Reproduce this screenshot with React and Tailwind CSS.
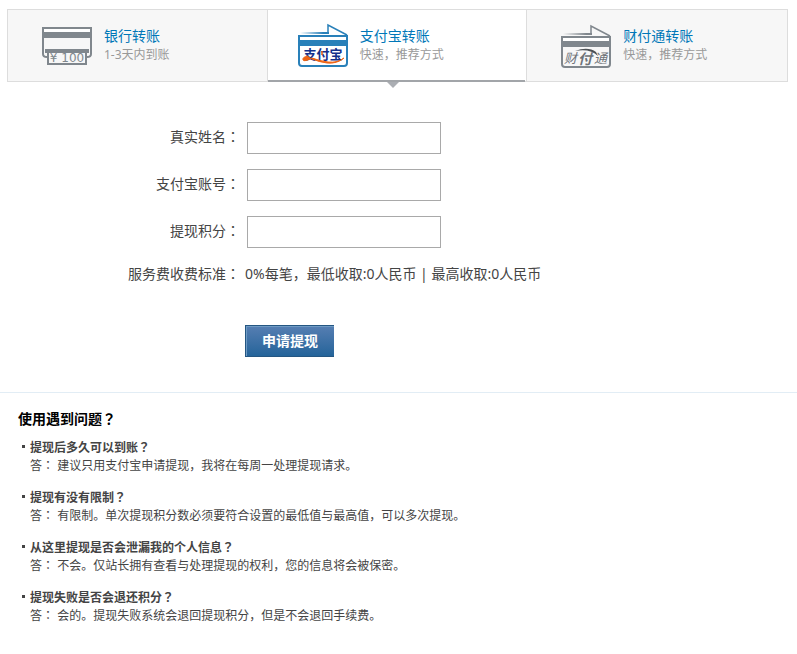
import React, { useState } from "react";

const FAQS = [
  {
    question: "提现后多久可以到账",
    answer: "建议只用支付宝申请提现，我将在每周一处理提现请求。",
  },
  {
    question: "提现有没有限制",
    answer: "有限制。单次提现积分数必须要符合设置的最低值与最高值，可以多次提现。",
  },
  {
    question: "从这里提现是否会泄漏我的个人信息",
    answer: "不会。仅站长拥有查看与处理提现的权利，您的信息将会被保密。",
  },
  {
    question: "提现失败是否会退还积分",
    answer: "会的。提现失败系统会退回提现积分，但是不会退回手续费。",
  },
];

// Full-width punctuation, centred in its cell
const Mark = ({ children }) => (
  <span className="leading-none font-['Noto_Sans_CJK_TC',sans-serif]">{children}</span>
);

const BankIcon = () => (
  <svg width="52" height="47" viewBox="0 0 52 47" aria-hidden="true">
    <path d="M2 6v26q0 3 4 3M50 6v26q0 3-4 3" fill="none" stroke="#80878d" strokeWidth="2" />
    <path d="M2 6h48v5H2z" fill="#fff" />
    <path d="M1 5h50v11H1zM3 7v3h46V7z" fill="#80878d" fillRule="evenodd" />
    <path d="M4 27h44v4H4z" fill="#80878d" />
    <path d="M7 30h38v12H7z" fill="#f7f7f7" stroke="#80878d" strokeWidth="2" />
    <text x="26" y="40" textAnchor="middle" fontSize="12" fill="#80878d" className="font-['DejaVu_Sans',sans-serif]">
      ¥ 100
    </text>
  </svg>
);

const AlipayIcon = () => (
  <svg width="52" height="47" viewBox="0 0 52 47" aria-hidden="true">
    <defs>
      <linearGradient id="alipayFade">
        <stop offset="0" stopColor="#2980b9" stopOpacity="0" />
        <stop offset="0.8" stopColor="#2980b9" />
      </linearGradient>
    </defs>
    <path d="M3 10h29v2H3z" fill="url(#alipayFade)" />
    <path d="M31 11V3l19 10" fill="none" stroke="#2980b9" strokeWidth="1.5" />
    <path d="M2 14h48v27q0 3-3 3H5q-3 0-3-3z" fill="#fff" stroke="#2980b9" strokeWidth="2" />
    <path d="M2 18h48v6H2z" fill="#2980b9" />
    <text x="26" y="37" textAnchor="middle" fontSize="13" fontWeight="bold" fill="#14308b" className="font-['Noto_Sans_CJK_SC',sans-serif]">
      支付宝
    </text>
    <path
      d="M11 34Q5 35 6 38q2 2 9-2 8 3 16 4 10 1 16-4-7 6-17 5-8-1-15-4"
      fill="#ee6414"
      stroke="#ee6414"
      strokeWidth="1"
      strokeLinecap="round"
    />
    <path d="M25 29v4" stroke="#ee6414" strokeWidth="1.5" />
  </svg>
);

const TenpayIcon = () => (
  <svg width="52" height="47" viewBox="0 0 52 47" aria-hidden="true">
    <defs>
      <linearGradient id="tenpayFade">
        <stop offset="0" stopColor="#80878d" stopOpacity="0" />
        <stop offset="0.8" stopColor="#80878d" />
      </linearGradient>
    </defs>
    <path d="M3 11h29v2H3z" fill="url(#tenpayFade)" />
    <path d="M31 12V4l19 10" fill="none" stroke="#80878d" strokeWidth="1.5" />
    <path d="M2 15h48v27q0 3-3 3H5q-3 0-3-3z" fill="#f7f7f7" stroke="#80878d" strokeWidth="2" />
    <path d="M3 16h46v3H3z" fill="#fff" />
    <path d="M2 19h48v6H2z" fill="#80878d" />
    <g fill="#6d7277" fontStyle="italic" className="font-['Noto_Sans_CJK_SC',sans-serif]">
      <text x="4" y="41" fontSize="13">财</text>
      <text x="18" y="42" fontSize="14" fontWeight="bold">付</text>
      <text x="34" y="41" fontSize="13">通</text>
    </g>
    <path d="M15 29q13-5 21 1l2 4q-8-8-23-5z" fill="#4c5054" />
  </svg>
);

const METHODS = [
  { id: "bank", title: "银行转账", note: "1-3天内到账", Icon: BankIcon, pad: "pl-[33px]" },
  { id: "alipay", title: "支付宝转账", note: "快速，推荐方式", Icon: AlipayIcon, pad: "pl-[29px]" },
  { id: "tenpay", title: "财付通转账", note: "快速，推荐方式", Icon: TenpayIcon, pad: "pl-[33px]" },
];

const FIELDS = [
  { id: "realName", label: "真实姓名" },
  { id: "account", label: "支付宝账号" },
  { id: "points", label: "提现积分" },
];

const App = () => {
  const [method, setMethod] = useState("alipay");
  const [values, setValues] = useState({ realName: "", account: "", points: "" });

  const handleChange = (e) => {
    setValues({ ...values, [e.target.name]: e.target.value });
  };

  return (
    <div className="bg-white pt-[9px] pb-7 text-[#444] font-['Noto_Sans','Noto_Sans_CJK_SC',sans-serif]">
      {/* Transfer methods */}
      <div className="ml-[7px] mr-[9px] grid grid-cols-3 border border-[#ddd] divide-x divide-[#ddd]">
        {METHODS.map(({ id, title, note, Icon, pad }) => {
          const active = method === id;
          return (
            <button
              key={id}
              type="button"
              aria-pressed={active}
              onClick={() => setMethod(id)}
              className={`relative flex h-[71px] items-center gap-[11px] text-left cursor-pointer ${pad} ${
                active ? "bg-white" : "bg-[#f7f7f7]"
              }`}
            >
              <Icon />
              <span className="flex flex-col pb-px">
                <span className="text-sm leading-5 text-[#0077b8]">{title}</span>
                <span className="text-xs leading-[18px] text-[#999]">{note}</span>
              </span>
              {active && (
                <span className="absolute left-0 right-px -bottom-px h-[2px] bg-[#a2a5a9]">
                  <span className="absolute left-[119px] top-[2px] border-x-[6px] border-t-[6px] border-x-transparent border-t-[#abaeb3]"></span>
                </span>
              )}
            </button>
          );
        })}
      </div>

      {/* Withdrawal form */}
      <form className="mt-10 text-sm leading-5" onSubmit={(e) => e.preventDefault()}>
        <div className="flex flex-col gap-[15px]">
          {FIELDS.map(({ id, label }) => (
            <div key={id} className="flex items-center gap-[7px]">
              <label htmlFor={id} className="w-60 pb-[3px] text-right">
                {label}
                <Mark>：</Mark>
              </label>
              <input
                id={id}
                name={id}
                type="text"
                value={values[id]}
                onChange={handleChange}
                className="h-8 w-[194px] border border-[#a9a9a9] bg-white px-2 outline-none focus:border-[#2980b9]"
              />
            </div>
          ))}
        </div>
        <div className="mt-4 flex gap-[5px]">
          <span className="w-60 text-right">
            服务费收费标准
            <Mark>：</Mark>
          </span>
          <span>0%每笔，最低收取:0人民币 | 最高收取:0人民币</span>
        </div>
        <button
          type="submit"
          className="ml-[245px] mt-[41px] block h-8 w-[89px] cursor-pointer border border-r-0 border-[#245682] bg-linear-to-b from-[#557eb2] to-[#23649a] font-bold text-white shadow-[inset_1px_1px_0_#6f9bc4]"
        >
          申请提现
        </button>
      </form>

      {/* FAQ */}
      <section className="mt-[35px] border-t border-[#e2edf5] px-[18px] pt-4">
        <h2 className="text-sm leading-5 font-bold text-black">
          使用遇到问题<Mark>？</Mark>
        </h2>
        <ul className="mt-[10px] flex flex-col gap-[14px] pl-1 text-xs leading-[18px]">
          {FAQS.map(({ question, answer }) => (
            <li key={question} className="flex gap-[5px]">
              <span className="mt-[6px] size-[3px] shrink-0 bg-[#444]"></span>
              <div>
                <h3 className="font-bold">
                  {question}
                  <Mark>？</Mark>
                </h3>
                <p>
                  答<Mark>：</Mark> {answer}
                </p>
              </div>
            </li>
          ))}
        </ul>
      </section>
    </div>
  );
};

export default App;
